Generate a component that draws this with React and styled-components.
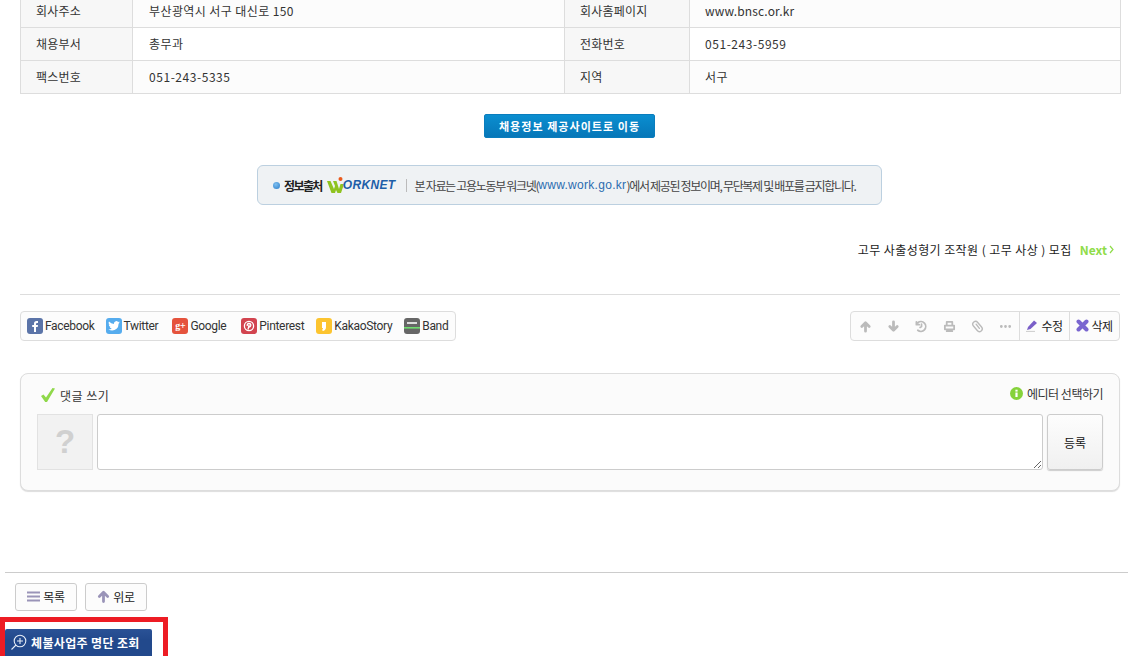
import React from "react";
import styled, { createGlobalStyle } from "styled-components";

const Global = createGlobalStyle`
  html, body { margin: 0; padding: 0; background: #fff; }
  body { width: 1128px; height: 656px; overflow: hidden; font-family: "Noto Sans CJK KR", "Noto Sans", sans-serif; font-size: 12px; color: #333; }
  * { box-sizing: border-box; }
`;

const Page = styled.div`
  display: flex;
  flex-direction: column;
  height: 656px;
  overflow: hidden;
`;
const Article = styled.div`
  padding: 0 8px 0 20px;
  display: flex;
  flex-direction: column;
`;
const InfoTable = styled.div`
  margin-top: -6px;
  display: grid;
  grid-template-columns: 112px 432px 125px 431px;
  width: 1101px;
  border: solid #ddd;
  border-width: 1px 0 0 1px;
`;
const Label = styled.div`
  height: 33px;
  display: flex;
  align-items: center;
  padding: 0 0 1px 15px;
  background: #f7f7f7;
  color: #333;
  border: solid #ddd;
  border-width: 0 1px 1px 0;
  font-size: 12px;
  letter-spacing: 0.2px;
`;
const Value = styled.div`
  height: 33px;
  display: flex;
  align-items: center;
  padding: 0 0 1px ${p => p.$pad}px;
  background: ${p => (p.$alt ? "#fcfcfc" : "#fff")};
  color: #333;
  border: solid #ddd;
  border-width: 0 1px 1px 0;
  font-size: 12px;
  letter-spacing: ${p => p.$spacing}px;
`;
const MoveRow = styled.div`
  display: flex;
  justify-content: center;
  margin-top: 20px;
  width: 1099px;
`;
const MoveButton = styled.div`
  width: 171px;
  height: 24px;
  display: flex;
  align-items: center;
  justify-content: center;
  border-radius: 2px;
  background: linear-gradient(#0a8ed0, #0777b8);
  border: 1px solid #0a7dbd;
  color: #fff;
  font-weight: 700;
  font-size: 11px;
  letter-spacing: 1.05px;
`;
const BannerRow = styled.div`
  display: flex;
  justify-content: center;
  margin-top: 27px;
  width: 1099px;
`;
const Banner = styled.div`
  width: 625px;
  height: 40px;
  display: flex;
  align-items: center;
  padding-left: 15px;
  background: #eff2f4;
  border: 1px solid #bcd0e0;
  border-radius: 6px;
  font-size: 12px;
  letter-spacing: -1.31px;
  color: #444;
  white-space: nowrap;
`;
const Dot = styled.span`
  width: 7px;
  height: 7px;
  border-radius: 50%;
  background: radial-gradient(circle at 40% 35%, #7fc0f0, #2a7cc8);
  margin-right: 4px;
`;
const SourceLabel = styled.span`
  font-weight: 700;
  color: #222;
  letter-spacing: -1.6px;
  margin-right: 5px;
`;
const LogoText = styled.span`
  font-family: "Liberation Sans", sans-serif;
  font-style: italic;
  font-weight: 700;
  font-size: 12px;
  letter-spacing: 0.35px;
  color: #1d5fa8;
  margin-left: -1px;
`;
const Separator = styled.span`
  width: 1px;
  height: 13px;
  background: #bbb;
  margin: 0 8px 0 10px;
`;
const SiteLink = styled.span`
  color: #2b6cb0;
  font-family: "Liberation Sans", sans-serif;
  letter-spacing: 0.3px;
`;
const NextRow = styled.div`
  display: flex;
  justify-content: flex-end;
  align-items: center;
  gap: 8px;
  width: 1094px;
  margin-top: 34px;
  margin-bottom: 1px;
  height: 20px;
  font-size: 12px;
  color: #222;
  letter-spacing: 0.42px;
`;
const NextLink = styled.span`
  font-weight: 700;
  color: #8fdc4a;
  letter-spacing: 0;
  display: flex;
  align-items: center;
  gap: 2px;
`;
const Rule = styled.div`
  width: 1100px;
  height: 1px;
  background: #ddd;
  margin-top: 34px;
`;
const ToolRow = styled.div`
  display: flex;
  justify-content: space-between;
  width: 1100px;
  margin-top: 16px;
`;
const ShareBar = styled.div`
  width: 436px;
  height: 30px;
  display: flex;
  align-items: center;
  padding-left: 6px;
  border: 1px solid #ddd;
  border-radius: 4px;
  background: #fcfcfc;
  font-family: Roboto, sans-serif;
  font-size: 12px;
  letter-spacing: -0.32px;
`;
const ShareItem = styled.div`
  display: flex;
  align-items: center;
  gap: 2px;
  margin-right: ${p => p.$gap}px;
  color: #333;
  white-space: nowrap;
`;
const ShareIcon = styled.span`
  width: 16px;
  height: 16px;
  border-radius: 3px;
  background: ${p => p.$bg};
  color: #fff;
  display: flex;
  align-items: center;
  justify-content: center;
  font-size: 10px;
  font-weight: 700;
  font-family: "Liberation Serif", serif;
  line-height: 1;
`;
const ActionBar = styled.div`
  width: 270px;
  height: 30px;
  display: flex;
  align-items: stretch;
  border: 1px solid #ddd;
  border-radius: 4px;
  background: #fcfcfc;
`;
const IconCell = styled.div`
  width: 28px;
  display: flex;
  align-items: center;
  justify-content: center;
  color: #bbb;
`;
const ActionCell = styled.div`
  display: flex;
  align-items: center;
  justify-content: center;
  gap: 2px;
  width: ${p => p.$w}px;
  padding-bottom: 2px;
  border-left: 1px solid #ddd;
  color: #222;
  font-size: 12px;
  letter-spacing: -0.5px;
  white-space: nowrap;
`;
const CommentBox = styled.div`
  width: 1100px;
  height: 118px;
  margin-top: 32px;
  padding: 0 16px;
  border: 1px solid #ddd;
  border-radius: 8px;
  background: #fbfbfb;
  box-shadow: 0 1px 1px #ddd;
`;
const CommentHead = styled.div`
  height: 40px;
  display: flex;
  align-items: center;
  justify-content: space-between;
  padding: 2px 0 0 4px;
  color: #333;
`;
const CommentTitle = styled.div`
  display: flex;
  align-items: center;
  gap: 5px;
  letter-spacing: 0.5px;
`;
const EditorLink = styled.div`
  display: flex;
  align-items: center;
  gap: 4px;
  margin-bottom: 3px;
  letter-spacing: -0.5px;
`;
const CommentBody = styled.div`
  display: flex;
  gap: 4px;
  height: 56px;
`;
const Avatar = styled.div`
  width: 56px;
  height: 56px;
  background: #f2f2f2;
  border: 1px solid #e2e2e2;
  display: flex;
  align-items: center;
  justify-content: center;
  color: #d0d0d0;
  font: 700 33px "Liberation Sans", sans-serif;
`;
const CommentInput = styled.textarea`
  width: 946px;
  height: 56px;
  padding: 4px;
  border: 1px solid #ccc;
  border-radius: 3px;
  background: #fff;
  outline: none;
`;
const SubmitButton = styled.div`
  width: 56px;
  height: 56px;
  display: flex;
  align-items: center;
  justify-content: center;
  border: 1px solid #ccc;
  border-radius: 3px;
  background: linear-gradient(#fdfdfd, #f0f0f0);
  box-shadow: 0 1px 1px #ccc;
  color: #111;
`;
const Footer = styled.div`
  margin: 81px 0 0 5px;
  border-top: 1px solid #ccc;
  padding: 10px 0 0 10px;
  display: flex;
  gap: 8px;
`;
const FooterButton = styled.div`
  width: 62px;
  height: 28px;
  display: flex;
  align-items: center;
  justify-content: center;
  gap: 3px;
  padding-bottom: 2px;
  border: 1px solid #ccc;
  border-radius: 3px;
  background: #fcfcfc;
  color: #222;
  letter-spacing: -0.4px;
`;
const Highlight = styled.div`
  margin-top: 6px;
  width: 168px;
  height: 39px;
  border: solid #ed1c24;
  border-width: 5px 5px 0 5px;
  padding-top: 7px;
`;
const ReportButton = styled.div`
  width: 147px;
  height: 27px;
  display: flex;
  align-items: center;
  padding-left: 5px;
  gap: 4px;
  background: linear-gradient(#2a5296, #22498c 40%);
  border-radius: 2px 2px 0 0;
  color: #fff;
  font-weight: 700;
  font-size: 12px;
  letter-spacing: 0.35px;
  white-space: nowrap;
`;

const rows = [
  ["회사주소", "부산광역시 서구 대신로 150", "회사홈페이지", "www.bnsc.or.kr", true, 0.4, 0.15],
  ["채용부서", "총무과", "전화번호", "051-243-5959", false, 0.4, 0.55],
  ["팩스번호", "051-243-5335", "지역", "서구", true, 0.55, 0.4],
];

const Stroke = ({ children, size = 13, color = "#bbb", width = 2.4 }) => (
  <svg width={size} height={size} viewBox="0 0 14 14" fill="none" stroke={color} strokeWidth={width} strokeLinecap="round" strokeLinejoin="round">
    {children}
  </svg>
);

const WorknetW = () => (
  <svg width="17" height="18" viewBox="0 0 17 18">
    <path d="M0 5h3.500L7 13l1-3-2-5h3.500L12 13l1.500-5H17l-3 9h-3.500L9 14l-1 3H4.500z" fill="#8fc31f" />
    <circle cx="13.500" cy="3" r="2" fill="#ea5a1c" />
  </svg>
);

export default function App() {
  return (
    <Page>
      <Global />
      <Article>
        <InfoTable>
          {rows.map(r => (
            <React.Fragment key={r[0]}>
              <Label>{r[0]}</Label>
              <Value $alt={r[4]} $spacing={r[5]} $pad={16}>{r[1]}</Value>
              <Label>{r[2]}</Label>
              <Value $alt={r[4]} $spacing={r[6]} $pad={15}>{r[3]}</Value>
            </React.Fragment>
          ))}
        </InfoTable>
        <MoveRow><MoveButton>채용정보 제공사이트로 이동</MoveButton></MoveRow>
        <BannerRow>
          <Banner>
            <Dot />
            <SourceLabel>정보출처</SourceLabel>
            <WorknetW />
            <LogoText>ORKNET</LogoText>
            <Separator />
            본 자료는 고용노동부 워크넷(<SiteLink>www.work.go.kr</SiteLink>)에서 제공된 정보이며, 무단복제 및 배포를 금지합니다.
          </Banner>
        </BannerRow>
        <NextRow>
          고무 사출성형기 조작원 ( 고무 사상 ) 모집
          <NextLink>
            Next
            <svg width="5" height="9" viewBox="0 0 5 9" fill="none" stroke="#8fdc4a" strokeWidth="1.2"><path d="M1 1l3 3.500L1 8" /></svg>
          </NextLink>
        </NextRow>
        <Rule />
        <ToolRow>
          <ShareBar>
            <ShareItem $gap={11}><ShareIcon $bg="#5b74a8">
              <svg width="8" height="12" viewBox="0 0 8 12"><path d="M3 12V7H1.200V5H3V3.500Q3 1 5.500 1H7v2H6q-1 0-1 1v1h2l-.3 2H5v5z" fill="#fff" /></svg>
            </ShareIcon>Facebook</ShareItem>
            <ShareItem $gap={14}><ShareIcon $bg="#55acee">
              <svg width="12" height="10" viewBox="0 0 12 10"><path d="M11.800 1.300q-.6.300-1.300.3.700-.4 1-1.200-.7.400-1.400.5A2.400 2.400 0 0 0 6 3Q3 2.800 1 .600q-1 1.900.7 3.200-.5 0-1-.3 0 1.800 1.900 2.300-.5.100-1 0 .5 1.500 2.200 1.600Q2.300 8.700.3 8.500 5 11 8.600 7.800q2-1.900 2-5.100.7-.6 1.200-1.400z" fill="#fff" /></svg>
            </ShareIcon>Twitter</ShareItem>
            <ShareItem $gap={15}><ShareIcon $bg="#e5533d">g+</ShareIcon>Google</ShareItem>
            <ShareItem $gap={12}><ShareIcon $bg="#d2444f">
              <svg width="12" height="12" viewBox="0 0 12 12" fill="none" stroke="#fff" strokeWidth="1.300"><circle cx="6" cy="6" r="4.600" /><path d="M5 9.500l1.200-5M4.400 6a1.800 1.800 0 1 1 1.600 1" /></svg>
            </ShareIcon>Pinterest</ShareItem>
            <ShareItem $gap={12}><ShareIcon $bg="#fcc42f">
              <svg width="8" height="11" viewBox="0 0 8 11"><path d="M2 1h4v5q0 3-3 4l-1-1q1-1 1-2H2z" fill="#fff" /></svg>
            </ShareIcon>KakaoStory</ShareItem>
            <ShareItem $gap={0}><ShareIcon $bg="#666">
              <svg width="16" height="16" viewBox="0 0 16 16"><rect x="3" y="4" width="10" height="2" fill="#ddd" /><rect x="0" y="9" width="16" height="1.600" fill="#6fdc6f" /></svg>
            </ShareIcon>Band</ShareItem>
          </ShareBar>
          <ActionBar>
            <IconCell><Stroke width={3}><path d="M7 12V3M3 7l4-4 4 4" /></Stroke></IconCell>
            <IconCell><Stroke width={3}><path d="M7 2v9M3 7l4 4 4-4" /></Stroke></IconCell>
            <IconCell><Stroke width={1.900}><path d="M3 3A5.200 5.200 0 1 1 3 11M1.500 2v3h3M7 4.500V7l-1.500 1" /></Stroke></IconCell>
            <IconCell><Stroke width={1.900}><path d="M4 5V2h6v3M2 6h10v4H2zM4 12h6" /></Stroke></IconCell>
            <IconCell>
              <Stroke width={1.500}>
                <rect x="4" y="0.800" width="6" height="12.400" rx="3" transform="rotate(-40 7 7)" />
                <path d="M5.500 4.500l3.500 4.500" />
              </Stroke>
            </IconCell>
            <IconCell><Stroke width={3}><path d="M2.500 7h.01M7 7h.01M11.500 7h.01" /></Stroke></IconCell>
            <ActionCell $w={50}>
              <svg width="13" height="13" viewBox="0 0 13 13"><path d="M1 11l1-3 6-6.500 3 2.500-6.500 6z" fill="#7a5fc8" /><path d="M0 12.400h9" stroke="#ccc" /></svg>
              수정
            </ActionCell>
            <ActionCell $w={50}>
              <svg width="13" height="13" viewBox="0 0 13 13"><path d="M2.500 2.500l8 8M10.500 2.500l-8 8" stroke="#7a66d0" strokeWidth="4" strokeLinecap="round" /></svg>
              삭제
            </ActionCell>
          </ActionBar>
        </ToolRow>
        <CommentBox>
          <CommentHead>
            <CommentTitle>
              <svg width="14" height="14" viewBox="0 0 14 14"><path d="M0 8l2.500-1.500L5 9.500 11.500 0 14 .600 6 14H4.200z" fill="#8fd84a" /></svg>
              댓글 쓰기
            </CommentTitle>
            <EditorLink>
              <svg width="13" height="13" viewBox="0 0 13 13"><circle cx="6.500" cy="6.500" r="6.500" fill="#85d23a" /><rect x="5.400" y="5.500" width="2.200" height="4.500" fill="#fff" /><rect x="5.400" y="2.700" width="2.200" height="1.900" fill="#fff" /></svg>
              에디터 선택하기
            </EditorLink>
          </CommentHead>
          <CommentBody>
            <Avatar>?</Avatar>
            <CommentInput aria-label="댓글" />
            <SubmitButton>등록</SubmitButton>
          </CommentBody>
        </CommentBox>
      </Article>
      <Footer>
        <FooterButton>
          <svg width="13" height="11" viewBox="0 0 13 11"><path d="M0 1.500h13M0 5.500h13M0 9.500h13" stroke="#9a94b8" strokeWidth="2" /></svg>
          목록
        </FooterButton>
        <FooterButton>
          <Stroke color="#9a94b8" width={3}><path d="M7 12.500V3M2.500 7L7 2.500 11.500 7" /></Stroke>
          위로
        </FooterButton>
      </Footer>
      <Highlight>
        <ReportButton>
          <svg width="17" height="17" viewBox="0 0 17 17" fill="none" stroke="#e6edf7" strokeWidth="1.100"><circle cx="10" cy="7" r="5.800" /><path d="M6 11l-4.500 4.500M10 4v6M7 7h6" /></svg>
          체불사업주 명단 조회
        </ReportButton>
      </Highlight>
    </Page>
  );
}
